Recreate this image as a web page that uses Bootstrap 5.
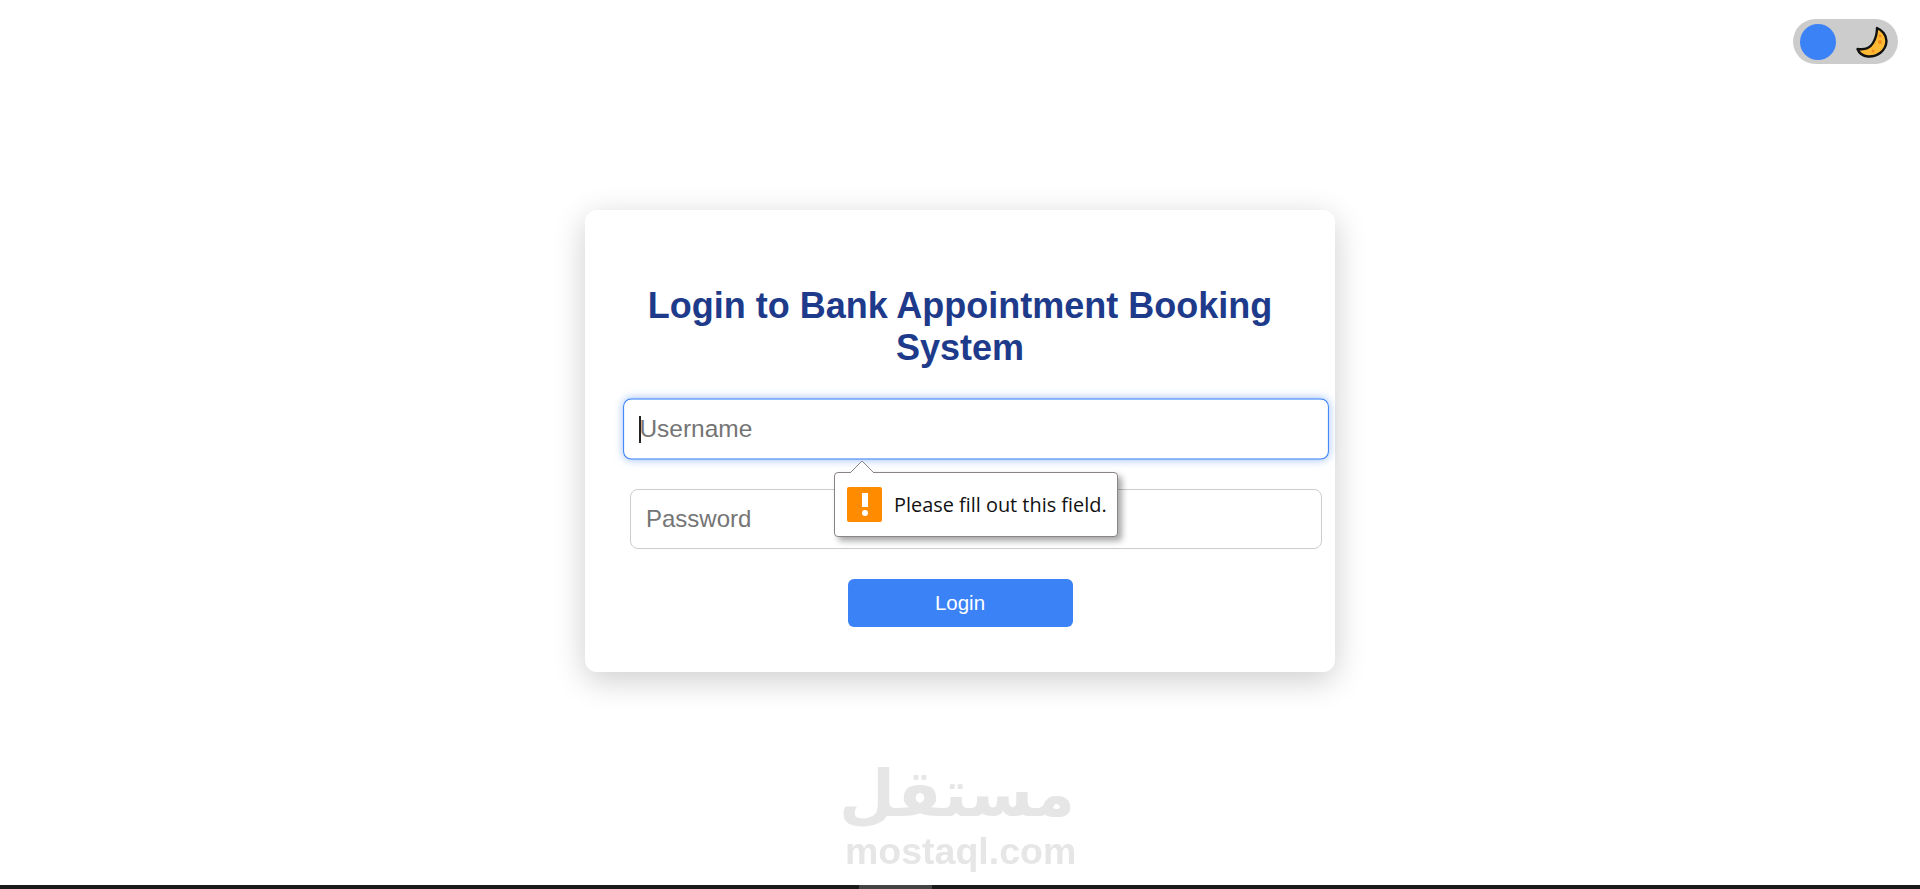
<!DOCTYPE html>
<html lang="en">
  <head>
    <meta charset="UTF-8" />
    <meta name="viewport" content="width=device-width, initial-scale=1.0" />
    <title>Login</title>
    <link href="https://cdn.jsdelivr.net/npm/bootstrap@5.3.0/dist/css/bootstrap.min.css" rel="stylesheet" />
    <style>
      body {
        background-color: #fff;
        font-family: "Liberation Sans", Arial, sans-serif;
        height: 889px;
        overflow: hidden;
      }
      .login-page {
        height: 889px;
        padding-bottom: 7px;
      }
      .login-box {
        width: 750px;
        height: 462px;
        padding: 75px 40px 0;
        border: 0;
        border-radius: 12px;
        box-shadow: 0 8px 32px rgba(0, 0, 0, 0.2);
      }
      .login-title {
        color: #1e3a8a;
        font-family: "Liberation Sans", Arial, sans-serif;
        font-size: 36px;
        font-weight: 700;
        line-height: 42px;
        margin-bottom: 30px;
      }
      .field-wrap {
        width: 692px;
        margin-left: 5px;
        margin-bottom: 30px;
        position: relative;
      }
      .login-input.form-control {
        height: 60px;
        padding: 15px;
        font-size: 24px;
        line-height: 28px;
        color: #212529;
        border: 1px solid #ccc;
        border-radius: 8px;
      }
      .login-input.form-control::placeholder {
        color: #757575;
        opacity: 1;
      }
      .login-input.is-focus {
        transform: scale(1.02);
        border-color: #3b82f6;
        box-shadow: 0 0 8px rgba(59, 130, 246, 0.5);
      }
      .input-caret {
        position: absolute;
        left: 9px;
        top: 17px;
        width: 2px;
        height: 27px;
        background-color: #222;
      }
      .login-btn.btn {
        width: 225px;
        height: 48px;
        background-color: #3b82f6;
        border: 0;
        border-radius: 6px;
        color: #fff;
        font-size: 20.5px;
        line-height: 24px;
      }
      .valid-tip {
        position: absolute;
        left: 204px;
        top: 73px;
        width: 284px;
        height: 65px;
        background: #fff;
        border: 1px solid #8a8486;
        border-radius: 4px;
        box-shadow: 4px 4px 6px rgba(0, 0, 0, 0.35);
        padding-left: 12px;
        gap: 12px;
        z-index: 5;
      }
      .valid-tip-arrow {
        position: absolute;
        left: 14px;
        top: -13px;
      }
      .valid-tip-icon {
        width: 35px;
        height: 35px;
        background-color: #ff8c00;
        border-radius: 2px;
      }
      .valid-tip-text {
        font-family: "Open Sans", sans-serif;
        font-size: 19.9px;
        color: #111;
        white-space: nowrap;
      }
      .theme-toggle {
        position: fixed;
        top: 19px;
        left: 1793px;
        width: 105px;
        height: 45px;
        background-color: #ccc;
        border-radius: 23px;
        padding-left: 7px;
        padding-right: 10px;
      }
      .theme-knob {
        width: 36px;
        height: 36px;
        background-color: #3b82f6;
        border-radius: 50%;
      }
      .site-mark {
        position: fixed;
        left: 845px;
        top: 755px;
        width: 230px;
        color: #e6e6e6;
        text-align: center;
      }
      .site-mark-ar {
        font-family: "DejaVu Sans", sans-serif;
        font-size: 64.5px;
        font-weight: 700;
        line-height: 78px;
        white-space: nowrap;
      }
      .site-mark-en {
        font-family: "Liberation Sans", sans-serif;
        font-size: 37.5px;
        font-weight: 700;
        line-height: 36px;
        white-space: nowrap;
      }
      .bottom-strip {
        position: fixed;
        left: 0;
        right: 0;
        bottom: 0;
        height: 4px;
        background-color: #1a1a1a;
      }
      .bottom-strip-thumb {
        width: 73px;
        margin-left: 859px;
        height: 4px;
        background-color: #444;
      }
    </style>
  </head>
  <body>
    <div class="login-page d-flex align-items-center justify-content-center">
      <div class="card login-box">
        <h2 class="login-title text-center">Login to Bank Appointment Booking System</h2>
        <form>
          <div class="field-wrap">
            <input type="text" class="form-control login-input is-focus" placeholder="Username" />
            <span class="input-caret"></span>
            <div class="valid-tip d-flex align-items-center">
              <svg class="valid-tip-arrow" width="26" height="14" viewBox="0 0 26 14">
                <path d="M1 13 L13 1 L25 13" fill="#fff" stroke="#8a8486" stroke-width="1" />
              </svg>
              <span class="valid-tip-icon d-flex align-items-center justify-content-center">
                <svg width="12" height="27" viewBox="0 0 12 27">
                  <rect x="3" y="2" width="6" height="14" fill="#fff" />
                  <circle cx="6" cy="22" r="3" fill="#fff" />
                </svg>
              </span>
              <span class="valid-tip-text">Please fill out this field.</span>
            </div>
          </div>
          <div class="field-wrap">
            <input type="password" class="form-control login-input" placeholder="Password" />
          </div>
          <div class="text-center">
            <button type="button" class="btn login-btn">Login</button>
          </div>
        </form>
      </div>
    </div>

    <div class="theme-toggle d-flex align-items-center justify-content-between">
      <span class="theme-knob"></span>
      <svg width="32" height="32" viewBox="0 0 32 32">
        <path d="M21 2 C26 4 30.5 9 30.5 15 C30 25 21 31 12 30.5 C7 30 3 27 1.5 23 C8 24 14 22 17 17 C20 12 21 7 21 2 Z" fill="#fdb933" stroke="#111" stroke-width="2.4" stroke-linejoin="round" />
        <circle cx="24" cy="10" r="1.5" fill="#f58a1f" />
        <circle cx="24" cy="16" r="2" fill="#f58a1f" />
        <circle cx="17" cy="25" r="1.5" fill="#f58a1f" />
      </svg>
    </div>

    <div class="site-mark">
      <div class="site-mark-ar" dir="rtl" lang="ar">مستقل</div>
      <div class="site-mark-en">mostaql.com</div>
    </div>

    <div class="bottom-strip"><div class="bottom-strip-thumb"></div></div>

    <script src="https://cdn.jsdelivr.net/npm/bootstrap@5.3.0/dist/js/bootstrap.bundle.min.js"></script>
  </body>
</html>
